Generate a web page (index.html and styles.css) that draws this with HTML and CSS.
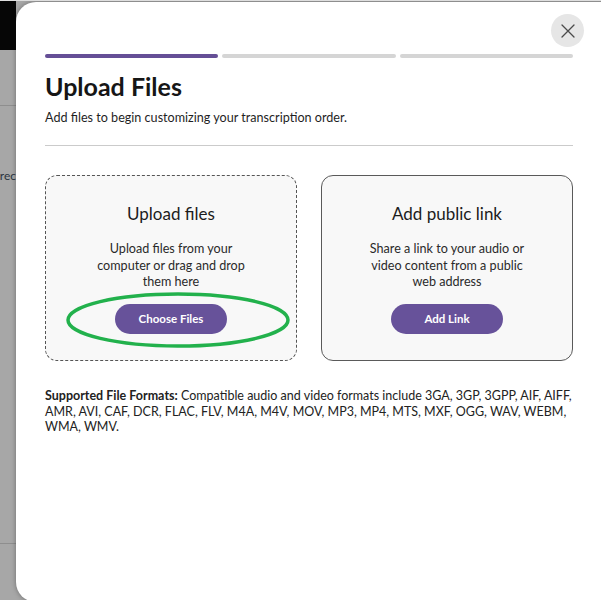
FILE: index.html
```html
<!DOCTYPE html>
<html lang="en">
<head>
<meta charset="utf-8">
<title>Upload Files</title>
<link rel="stylesheet" href="styles.css">
</head>
<body>
<div class="backdrop">
  <div class="bg-topbar"></div>
  <div class="bg-rule bg-rule-1"></div>
  <div class="bg-text"><span class="bg-dot"></span>rec</div>
  <div class="bg-rule bg-rule-2"></div>
</div>

<div class="modal">
  <button class="close" aria-label="Close">
    <svg viewBox="0 0 16 16" width="16" height="16"><path d="M2 2 L14 14 M14 2 L2 14" stroke="#4a4a4a" stroke-width="1.3" fill="none" stroke-linecap="round"/></svg>
  </button>
  <div class="content">
    <div class="steps">
      <span class="step step-active"></span>
      <span class="step"></span>
      <span class="step"></span>
    </div>
    <h1 class="title">Upload Files</h1>
    <p class="subtitle">Add files to begin customizing your transcription order.</p>
    <hr class="divider">
    <div class="cards">
      <div class="card card-dashed">
        <h2 class="card-title">Upload files</h2>
        <p class="card-text">Upload files from your computer or drag and drop them here</p>
        <button class="btn">Choose Files</button>
      </div>
      <div class="card card-solid">
        <h2 class="card-title">Add public link</h2>
        <p class="card-text">Share a link to your audio or video content from a public web address</p>
        <button class="btn">Add Link</button>
      </div>
    </div>
    <p class="formats"><strong>Supported File Formats:</strong> Compatible audio and video formats include 3GA, 3GP, 3GPP, AIF, AIFF, AMR, AVI, CAF, DCR, FLAC, FLV, M4A, M4V, MOV, MP3, MP4, MTS, MXF, OGG, WAV, WEBM, WMA, WMV.</p>
  </div>
</div>

<svg class="annotation" width="230" height="62" viewBox="0 0 230 62">
  <ellipse cx="113" cy="29" rx="110" ry="26" fill="none" stroke="#22b14c" stroke-width="3.5"/>
</svg>
</body>
</html>
```

FILE: styles.css
```css
html, body {
  margin: 0;
  padding: 0;
  width: 601px;
  height: 600px;
  overflow: hidden;
}
body {
  position: relative;
  background: #a7a7a7;
  border-top: 1px solid #dedede;
  box-sizing: border-box;
  font-family: Lato, "Noto Sans", sans-serif;
  color: #1f1f1f;
}
.backdrop {
  width: 16px;
  display: flex;
  flex-direction: column;
}
.bg-topbar {
  height: 49px;
  background: #060606;
}
.bg-rule {
  height: 1px;
  background: #8e8e8e;
}
.bg-rule-1 {
  margin-top: 55px;
}
.bg-text {
  margin-top: 62px;
  font-size: 12px;
  color: #2b3440;
  white-space: nowrap;
  display: flex;
  align-items: center;
  gap: 1px;
  margin-left: -2px;
}
.bg-dot {
  width: 4px;
  height: 4px;
  border-radius: 50%;
  background: #3b7bc4;
}
.bg-rule-2 {
  margin-top: 360px;
}

.modal {
  position: absolute;
  left: 16px;
  top: 1px;
  width: 610px;
  height: 600px;
  background: #fff;
  border-radius: 20px;
  box-shadow: 0 0 5px rgba(0, 0, 0, 0.35);
  box-sizing: border-box;
  padding: 52px 0 0 29px;
}
.close {
  position: absolute;
  left: 535px;
  top: 12px;
  width: 33px;
  height: 33px;
  border: none;
  border-radius: 50%;
  background: #e6e6e6;
  padding: 0;
  display: flex;
  align-items: center;
  justify-content: center;
}
.content {
  width: 528px;
}
.steps {
  display: flex;
  gap: 4px;
}
.step {
  flex: 1;
  height: 4px;
  border-radius: 2px;
  background: #d5d5d5;
}
.step-active {
  background: #654f96;
}
.title {
  margin: 13px 0 0;
  font-size: 25px;
  line-height: 30px;
  font-weight: 700;
  color: #161616;
}
.subtitle {
  margin: 8px 0 0;
  font-size: 12.6px;
  line-height: 18px;
}
.divider {
  margin: 18px 0 0;
  border: none;
  border-top: 1px solid #cbcbcb;
  height: 0;
}
.cards {
  margin-top: 29px;
  display: grid;
  grid-template-columns: 1fr 1fr;
  gap: 24px;
}
.card {
  height: 186px;
  box-sizing: border-box;
  border-radius: 12px;
  background: #f8f8f8;
  display: flex;
  flex-direction: column;
  align-items: center;
  padding-top: 27px;
}
.card-dashed {
  border: 1px dashed #555;
}
.card-solid {
  border: 1px solid #5a5a5a;
}
.card-title {
  margin: 0;
  font-size: 17px;
  line-height: 22px;
  font-weight: 400;
  color: #1c1c1c;
}
.card-text {
  margin: 16px 0 0;
  width: 160px;
  text-align: center;
  font-size: 12.6px;
  line-height: 16.5px;
  color: #2a2a2a;
}
.btn {
  margin-top: 13px;
  width: 112px;
  height: 30px;
  border: none;
  border-radius: 15px;
  background: #67529a;
  color: #fff;
  font-family: Lato, "Noto Sans", sans-serif;
  font-size: 11.5px;
  font-weight: 700;
}
.formats {
  margin: 27px 0 0;
  font-size: 12.5px;
  line-height: 15.5px;
  color: #222;
}
.formats strong {
  font-weight: 700;
}
.annotation {
  position: absolute;
  left: 65px;
  top: 290px;
}
```
